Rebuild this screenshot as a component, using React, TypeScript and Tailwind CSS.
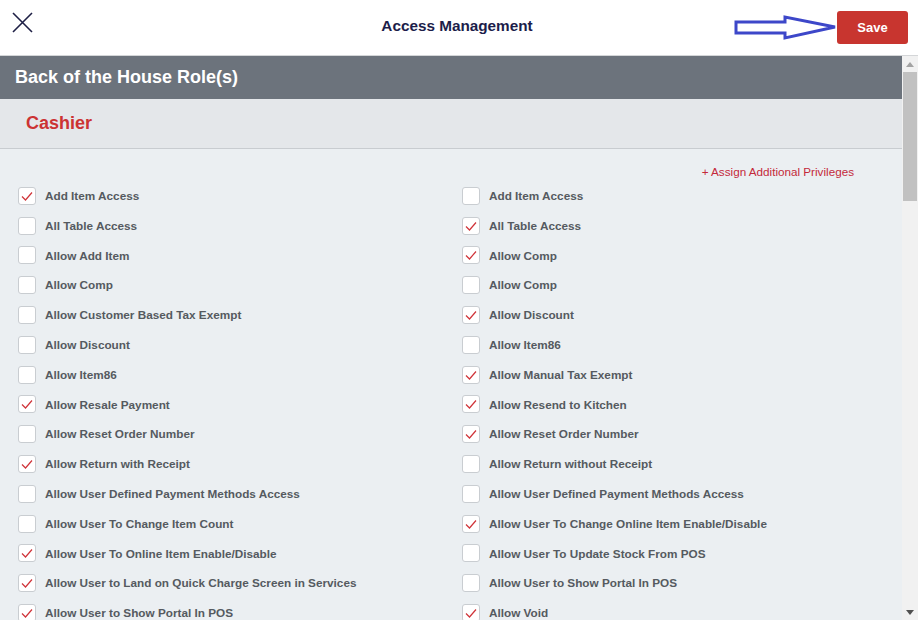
type Privilege = {
  label: string;
  checked: boolean;
};

const leftPrivileges: Privilege[] = [
  { label: 'Add Item Access', checked: true },
  { label: 'All Table Access', checked: false },
  { label: 'Allow Add Item', checked: false },
  { label: 'Allow Comp', checked: false },
  { label: 'Allow Customer Based Tax Exempt', checked: false },
  { label: 'Allow Discount', checked: false },
  { label: 'Allow Item86', checked: false },
  { label: 'Allow Resale Payment', checked: true },
  { label: 'Allow Reset Order Number', checked: false },
  { label: 'Allow Return with Receipt', checked: true },
  { label: 'Allow User Defined Payment Methods Access', checked: false },
  { label: 'Allow User To Change Item Count', checked: false },
  { label: 'Allow User To Online Item Enable/Disable', checked: true },
  { label: 'Allow User to Land on Quick Charge Screen in Services', checked: true },
  { label: 'Allow User to Show Portal In POS', checked: true },
];

const rightPrivileges: Privilege[] = [
  { label: 'Add Item Access', checked: false },
  { label: 'All Table Access', checked: true },
  { label: 'Allow Comp', checked: true },
  { label: 'Allow Comp', checked: false },
  { label: 'Allow Discount', checked: true },
  { label: 'Allow Item86', checked: false },
  { label: 'Allow Manual Tax Exempt', checked: true },
  { label: 'Allow Resend to Kitchen', checked: true },
  { label: 'Allow Reset Order Number', checked: true },
  { label: 'Allow Return without Receipt', checked: false },
  { label: 'Allow User Defined Payment Methods Access', checked: false },
  { label: 'Allow User To Change Online Item Enable/Disable', checked: true },
  { label: 'Allow User To Update Stock From POS', checked: false },
  { label: 'Allow User to Show Portal In POS', checked: false },
  { label: 'Allow Void', checked: true },
];

const CheckRow = ({ label, checked }: Privilege) => (
  <label className="flex items-center h-[29.8px] gap-[9px] shrink-0">
    <span className="w-[18px] h-[18px] shrink-0 bg-white border border-[#c9cdd1] rounded-[3px] flex items-center justify-center">
      {checked && (
        <svg width="14" height="14" viewBox="0 0 14 14">
          <path d="M2 7.5 L5.5 11 L12 3.5" fill="none" stroke="#d0343a" strokeWidth="1.2" />
        </svg>
      )}
    </span>
    <span className="text-[11.75px] font-bold text-[#555a60] whitespace-nowrap">{label}</span>
  </label>
);

const BlueArrow = () => (
  <svg width="104" height="26" viewBox="0 0 104 26" className="mr-[-1px]">
    <path
      d="M2 7 L51 7 L51 2 L101 12 L51 23 L51 18 L2 18 Z"
      fill="none"
      stroke="#3d47c9"
      strokeWidth="3"
      strokeLinejoin="miter"
    />
  </svg>
);

const App = () => {
  return (
    <div className="w-[918px] h-[620px] overflow-hidden bg-white flex flex-col font-['Liberation_Sans',Arial,sans-serif]">
      {/* header */}
      <div className="h-[56px] shrink-0 border-b border-[#d4d6d8] flex items-center pl-[12px] pr-[10px]">
        <div className="flex-1 flex items-center">
          <svg width="21" height="21" viewBox="0 0 21 21" className="-mt-[10px]">
            <path d="M1 1 L20 20 M20 1 L1 20" stroke="#1e1f45" strokeWidth="1.6" />
          </svg>
        </div>
        <h1 className="text-[15.3px] font-bold text-[#1c1d4a] -mt-[3px] mr-[6px]">Access Management</h1>
        <div className="flex-1 flex items-center justify-end">
          <BlueArrow />
          <button className="w-[71px] h-[33px] rounded-[3px] bg-[#c8352f] text-white text-[13px] font-bold">
            Save
          </button>
        </div>
      </div>

      <div className="flex flex-1 min-h-0">
        <div className="flex-1 min-w-0 bg-[#ebeff2] flex flex-col">
          <div className="h-[43px] shrink-0 bg-[#6c737c] flex items-center px-[15px]">
            <h2 className="text-[18px] font-bold text-white">Back of the House Role(s)</h2>
          </div>
          <div className="h-[50px] shrink-0 bg-[#e4e7ea] border-b border-[#c8ccd0] flex items-center px-[26px]">
            <h3 className="text-[18px] font-bold text-[#cc3333]">Cashier</h3>
          </div>
          <div className="flex shrink-0 justify-end pr-[48px] pt-[16px] pb-[2px]">
            <a className="text-[11.7px] text-[#c4293a] leading-[14px]">+ Assign Additional Privileges</a>
          </div>
          <div className="grid grid-cols-[444px_1fr] pl-[18px] shrink-0">
            <div className="flex flex-col">
              {leftPrivileges.map((p, i) => (
                <CheckRow key={i} label={p.label} checked={p.checked} />
              ))}
            </div>
            <div className="flex flex-col">
              {rightPrivileges.map((p, i) => (
                <CheckRow key={i} label={p.label} checked={p.checked} />
              ))}
            </div>
          </div>
        </div>

        {/* scrollbar */}
        <div className="w-[16px] shrink-0 bg-[#f1f1f1] flex flex-col items-center">
          <div className="h-[16px] flex items-center justify-center">
            <svg width="8" height="5" viewBox="0 0 8 5">
              <path d="M4 0 L8 5 L0 5 Z" fill="#a3a3a3" />
            </svg>
          </div>
          <div className="w-[14px] h-[129px] bg-[#c1c1c1]" />
          <div className="flex-1" />
          <div className="h-[16px] flex items-center justify-center">
            <svg width="8" height="5" viewBox="0 0 8 5">
              <path d="M0 0 L8 0 L4 5 Z" fill="#505050" />
            </svg>
          </div>
        </div>
      </div>
    </div>
  );
};

export default App;
